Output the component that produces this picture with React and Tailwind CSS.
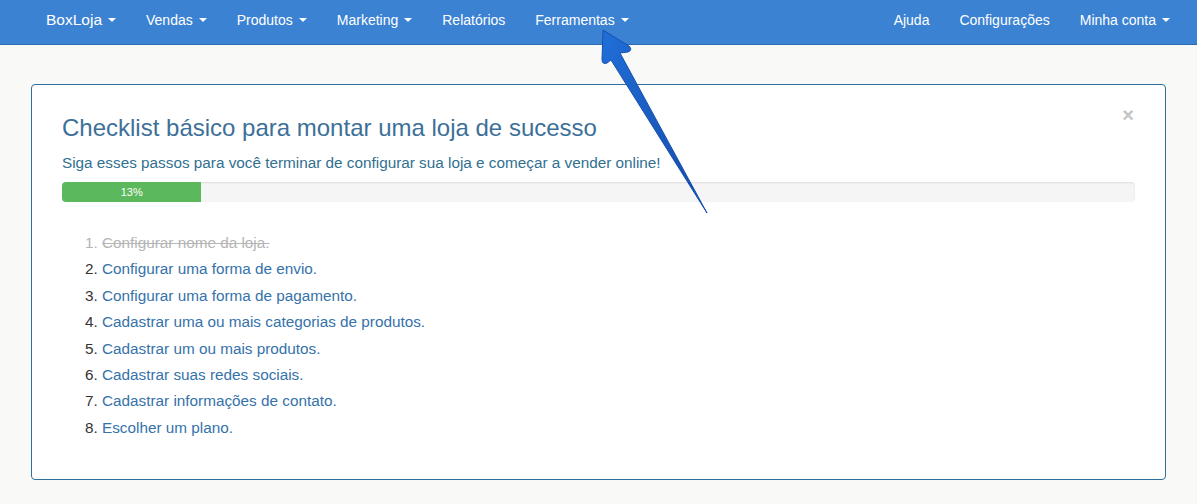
import React from 'react';

const leftNav = [
  { label: 'Vendas', caret: true },
  { label: 'Produtos', caret: true },
  { label: 'Marketing', caret: true },
  { label: 'Relatórios' },
  { label: 'Ferramentas', caret: true },
];

const rightNav = [
  { label: 'Ajuda' },
  { label: 'Configurações' },
  { label: 'Minha conta', caret: true },
];

const steps = [
  'Configurar nome da loja.',
  'Configurar uma forma de envio.',
  'Configurar uma forma de pagamento.',
  'Cadastrar uma ou mais categorias de produtos.',
  'Cadastrar um ou mais produtos.',
  'Cadastrar suas redes sociais.',
  'Cadastrar informações de contato.',
  'Escolher um plano.',
];

const Caret = () => (
  <span className="ml-[6px] inline-block w-0 h-0 border-x-[4px] border-x-transparent border-t-[4px] border-t-white align-middle" />
);

const NavItem = ({ item }) => (
  <a className="px-[15px] pb-[4px] text-[14px] text-white flex items-center h-full cursor-pointer">
    {item.label}
    {item.caret && <Caret />}
  </a>
);

const App = () => {
  return (
    <div className="relative min-h-[504px] bg-[#f9f9f8]" style={{ fontFamily: '"Liberation Sans", Arial, sans-serif' }}>
      <nav className="h-[45px] bg-[#3b82d3] border-b border-[#2d6cb4] flex justify-between pl-[46px] pr-[12px]">
        <div className="flex h-full">
          <a className="pr-[15px] pb-[4px] text-[15.5px] text-white flex items-center h-full cursor-pointer">
            BoxLoja
            <Caret />
          </a>
          {leftNav.map(item => <NavItem key={item.label} item={item} />)}
        </div>
        <div className="flex h-full">
          {rightNav.map(item => <NavItem key={item.label} item={item} />)}
        </div>
      </nav>

      <div className="px-[31px] pt-[39px]">
        <div className="relative bg-white border border-[#2f6f9f] rounded-[4px] px-[30px] pt-[28px] pb-[38px]">
          <button className="absolute right-[31px] top-[20px] text-[#c4c4c4] text-[20px] leading-none font-bold">×</button>
          <h3 className="text-[24px] leading-[30px] text-[#3d7099]">Checklist básico para montar uma loja de sucesso</h3>
          <p className="mt-[10px] text-[15.3px] leading-[20px] text-[#31708f]">Siga esses passos para você terminar de configurar sua loja e começar a vender online!</p>
          <div className="mt-[9px] h-[20px] bg-[#f5f5f5] rounded-[4px] overflow-hidden shadow-[inset_0_1px_2px_rgba(0,0,0,0.1)]">
            <div className="h-full bg-[#5cb85c] text-white text-[11px] leading-[20px] text-center" style={{ width: '13%' }}>13%</div>
          </div>
          <ol className="mt-[28px] pl-[40px] list-decimal text-[15.3px] leading-[26.4px] text-[#333]">
            {steps.map((step, i) => (
              <li key={step} className={i === 0 ? 'text-[#b5b5b5]' : ''}>
                {i === 0 ? (
                  <span className="line-through">{step}</span>
                ) : (
                  <a className="text-[#3572aa] cursor-pointer">{step}</a>
                )}
              </li>
            ))}
          </ol>
        </div>
      </div>

      {/* arrow pointing at Ferramentas */}
      <svg className="absolute left-0 top-0 pointer-events-none" width="1197" height="504">
        <defs>
          <linearGradient id="arrowFill" x1="0" y1="0" x2="1" y2="1">
            <stop offset="0" stopColor="#1f6fd8" />
            <stop offset="1" stopColor="#1549a8" />
          </linearGradient>
        </defs>
        <path
          d="M603,30 L629,46 Q633,50 628,52 L620,53 L707,213 L611,60 L607,63 Q602,65 602,59 Z"
          fill="url(#arrowFill)"
          stroke="#1650b0"
          strokeWidth="1"
          strokeLinejoin="round"
        />
      </svg>
    </div>
  );
};

export default App;
